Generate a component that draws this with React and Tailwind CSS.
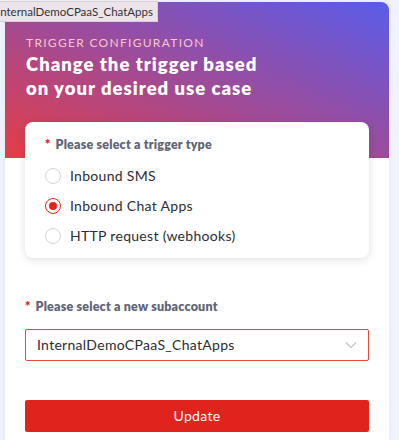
import React, { useState } from "react";

const options = ["Inbound SMS", "Inbound Chat Apps", "HTTP request (webhooks)"];

function Radio({ checked }) {
  return (
    <span
      className={
        "flex h-4 w-4 items-center justify-center rounded-full border bg-white " +
        (checked ? "border-[#e0241d]" : "border-[#d4d4d8]")
      }
    >
      {checked && <span className="h-2 w-2 rounded-full bg-[#e0241d]" />}
    </span>
  );
}

export default function App() {
  const [trigger, setTrigger] = useState(1);

  return (
    <div className="relative min-h-screen overflow-hidden bg-[#f1f3fc] font-['Lato',sans-serif]">
      <div className="ml-[5px] mt-[2px] w-[384px] min-h-[460px] rounded-tr-lg bg-white shadow-[0_0_6px_rgba(0,0,0,0.06)]">
        <div className="h-[156px] rounded-tr-lg bg-[linear-gradient(22deg,#e53d45_0%,#a34a93_45%,#5a5ce9_100%)] px-[21px] pt-[32px]">
          <div className="text-[12px] tracking-[1.3px] text-[#f8c6cf]">TRIGGER CONFIGURATION</div>
          <h1 className="text-[18.5px] font-extrabold leading-[24px] tracking-[1px] text-white">
            Change the trigger based
            <br />
            on your desired use case
          </h1>
        </div>

        <div className="mx-[20px] -mt-[36px] rounded-lg bg-white px-[20px] pt-[14px] pb-[7px] shadow-[0_2px_8px_rgba(0,0,0,0.12)]">
          <div className="text-[12.5px] font-extrabold tracking-[0.2px] text-[#5f6577]">
            <span className="mr-[5px] text-[#e0241d]">*</span>Please select a trigger type
          </div>
          <div className="mt-[6px] flex flex-col">
            {options.map((o, i) => (
              <button
                key={o}
                onClick={() => setTrigger(i)}
                className="flex h-[30px] items-center gap-[9px] text-left text-[14px] tracking-[0.3px] text-[#2d2d33]"
              >
                <Radio checked={trigger === i} />
                {o}
              </button>
            ))}
          </div>
        </div>

        <div className="px-[20px] pt-[40px]">
          <div className="text-[12.5px] font-extrabold tracking-[0.2px] text-[#5f6577]">
            <span className="mr-[5px] text-[#e0241d]">*</span>Please select a new subaccount
          </div>
          <div className="mt-[12px] flex h-[32px] items-center justify-between rounded-[2px] border border-[#e8483e] px-[11px] text-[14px] tracking-[0.3px] text-[#2d2d33]">
            <span>InternalDemoCPaaS_ChatApps</span>
            <svg width="12" height="8" viewBox="0 0 12 8" fill="none" stroke="#c4c4c8" strokeWidth="1.2">
              <path d="M1 1.5l5 5 5-5" />
            </svg>
          </div>
          <button className="mt-[39px] h-[32px] w-full rounded-[2px] bg-[#e0241d] text-[14px] tracking-[0.3px] text-white">
            Update
          </button>
        </div>
      </div>

      <div className="absolute left-[-6px] top-[1px] h-[21px] border border-[#d8cfd6] bg-[#ece4ea] pl-[2px] pr-[4px] text-[11.5px] leading-[19px] text-[#333]">
        InternalDemoCPaaS_ChatApps
      </div>
    </div>
  );
}
